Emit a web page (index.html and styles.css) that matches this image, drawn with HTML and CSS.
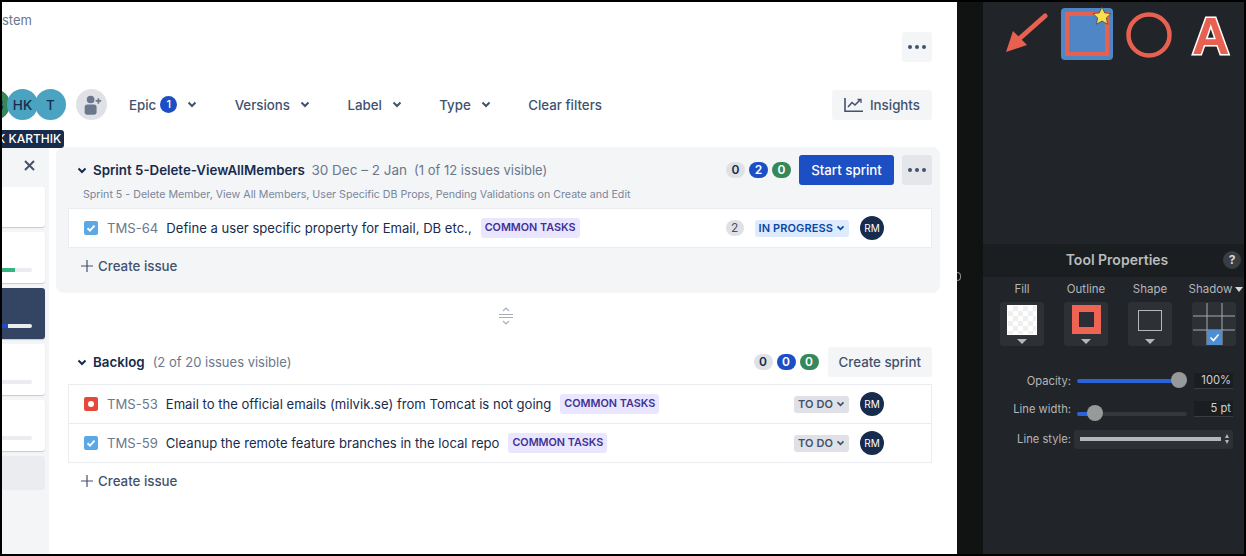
FILE: index.html
```html
<!DOCTYPE html>
<html lang="en">
<head>
    <meta charset="UTF-8">
    <meta name="viewport" content="width=device-width, initial-scale=1.0">
    <title>Backlog</title>
    <link rel="stylesheet" href="styles.css">
</head>
<body>
    <div class="jira">
        <div class="crumb">stem</div>
        <div class="top-actions">
            <button class="icon-btn"><span class="dots"><i></i><i></i><i></i></span></button>
        </div>

        <div class="toolbar">
            <div class="avatars">
                <span class="person green">AB</span>
                <span class="person teal">HK</span>
                <span class="person teal">T</span>
            </div>
            <span class="add-person">
                <svg width="24" height="24" viewBox="0 0 24 24"><circle cx="10.5" cy="6" r="4.2" fill="#6b778c"/><path d="M4 14.5a3 3 0 0 1 3-3h7a3 3 0 0 1 3 3V20a2.5 2.5 0 0 1-2.5 2.5h-8A2.5 2.5 0 0 1 4 20z" fill="#6b778c"/><path d="M19 4.5v6M16 7.500h6" stroke="#6b778c" stroke-width="1.8"/></svg>
            </span>
            <div class="filters">
                <span class="filter">Epic <b class="count">1</b><svg class="chev" viewBox="0 0 10 7"><path d="M1.500 1.500 5 5l3.500-3.500"/></svg></span>
                <span class="filter">Versions<svg class="chev" viewBox="0 0 10 7"><path d="M1.500 1.500 5 5l3.500-3.500"/></svg></span>
                <span class="filter">Label<svg class="chev" viewBox="0 0 10 7"><path d="M1.500 1.500 5 5l3.500-3.500"/></svg></span>
                <span class="filter">Type<svg class="chev" viewBox="0 0 10 7"><path d="M1.500 1.500 5 5l3.500-3.500"/></svg></span>
                <span class="filter">Clear filters</span>
            </div>
            <button class="btn insights">
                <svg width="20" height="16" viewBox="0 0 20 16" fill="none" stroke="#42526e" stroke-width="1.600"><path d="M1 1v13.200h18"/><path d="M4 10l4-4.500 3 2.500 5-5"/><path d="M13.500 2.500H17V6" stroke-width="1.300"/></svg>
                Insights
            </button>
        </div>
        <div class="tooltip">HK KARTHIK</div>

        <div class="main">
            <aside class="epics">
                <div class="epics-head">
                    <svg width="11" height="11" viewBox="0 0 11 11" stroke="#42526e" stroke-width="2"><path d="M1 1l9 9M10 1l-9 9"/></svg>
                </div>
                <div class="epic-card"></div>
                <div class="epic-card tall"><span class="bar"><i class="fill-green"></i></span></div>
                <div class="epic-card tall active"><span class="bar"><i class="fill-blue"></i></span></div>
                <div class="epic-card tall"><span class="bar"></span></div>
                <div class="epic-card tall"><span class="bar"></span></div>
                <div class="epic-card empty"></div>
            </aside>

            <div class="content">
                <section class="sprint">
                    <div class="list-head">
                        <svg class="chev dark" viewBox="0 0 10 7"><path d="M1.500 1.500 5 5l3.500-3.500"/></svg>
                        <span class="list-title">Sprint 5-Delete-ViewAllMembers</span>
                        <span class="muted dates">30 Dec – 2 Jan</span>
                        <span class="muted">(1 of 12 issues visible)</span>
                        <div class="head-right">
                            <span class="pill grey">0</span>
                            <span class="pill blue">2</span>
                            <span class="pill green">0</span>
                            <button class="btn primary">Start sprint</button>
                            <button class="icon-btn darker"><span class="dots"><i></i><i></i><i></i></span></button>
                        </div>
                    </div>
                    <p class="goal">Sprint 5 - Delete Member, View All Members, User Specific DB Props, Pending Validations on Create and Edit</p>
                    <div class="issues">
                        <div class="issue">
                            <svg class="type" viewBox="0 0 14 14"><rect width="14" height="14" rx="2" fill="#5ca8e6"/><path d="M3.500 7.200 6 9.600l4.500-5" fill="none" stroke="#fff" stroke-width="2"/></svg>
                            <span class="key">TMS-64</span>
                            <span class="summary">Define a user specific property for Email, DB etc.,</span>
                            <span class="tag">COMMON TASKS</span>
                            <div class="issue-right">
                                <span class="estimate">2</span>
                                <span class="status progress">IN PROGRESS<svg class="chev small" viewBox="0 0 10 7"><path d="M1.500 1.500 5 5l3.500-3.500"/></svg></span>
                                <span class="rm">RM</span>
                            </div>
                        </div>
                    </div>
                    <div class="create">
                        <svg width="12" height="12" viewBox="0 0 12 12" stroke="#42526e" stroke-width="1.200"><path d="M6 0v12M0 6h12"/></svg>
                        Create issue
                    </div>
                </section>

                <div class="splitter">
                    <svg width="16" height="18" viewBox="0 0 16 18" fill="none" stroke="#a5adba" stroke-width="1.100"><path d="M5 4l3-3 3 3M5 14l3 3 3-3M1 7.500h14M1 10.500h14"/></svg>
                </div>

                <section class="backlog">
                    <div class="list-head">
                        <svg class="chev dark" viewBox="0 0 10 7"><path d="M1.500 1.500 5 5l3.500-3.500"/></svg>
                        <span class="list-title">Backlog</span>
                        <span class="muted dates">(2 of 20 issues visible)</span>
                        <div class="head-right">
                            <span class="pill grey">0</span>
                            <span class="pill blue">0</span>
                            <span class="pill green">0</span>
                            <button class="btn">Create sprint</button>
                        </div>
                    </div>
                    <div class="issues">
                        <div class="issue">
                            <svg class="type" viewBox="0 0 14 14"><rect width="14" height="14" rx="2" fill="#e5493a"/><circle cx="7" cy="7" r="3" fill="#fff"/></svg>
                            <span class="key">TMS-53</span>
                            <span class="summary">Email to the official emails (milvik.se) from Tomcat is not going</span>
                            <span class="tag">COMMON TASKS</span>
                            <div class="issue-right">
                                <span class="status todo">TO DO<svg class="chev small" viewBox="0 0 10 7"><path d="M1.500 1.500 5 5l3.500-3.500"/></svg></span>
                                <span class="rm">RM</span>
                            </div>
                        </div>
                        <div class="issue">
                            <svg class="type" viewBox="0 0 14 14"><rect width="14" height="14" rx="2" fill="#5ca8e6"/><path d="M3.500 7.200 6 9.600l4.500-5" fill="none" stroke="#fff" stroke-width="2"/></svg>
                            <span class="key">TMS-59</span>
                            <span class="summary">Cleanup the remote feature branches in the local repo</span>
                            <span class="tag">COMMON TASKS</span>
                            <div class="issue-right">
                                <span class="status todo">TO DO<svg class="chev small" viewBox="0 0 10 7"><path d="M1.500 1.500 5 5l3.500-3.500"/></svg></span>
                                <span class="rm">RM</span>
                            </div>
                        </div>
                    </div>
                    <div class="create">
                        <svg width="12" height="12" viewBox="0 0 12 12" stroke="#42526e" stroke-width="1.200"><path d="M6 0v12M0 6h12"/></svg>
                        Create issue
                    </div>
                </section>
            </div>
        </div>
    </div>

    <div class="gutter"></div>

    <div class="panel">
        <div class="tools">
            <svg class="tool-arrow" width="44" height="42" viewBox="0 0 44 42"><path d="M39 4 13 27" stroke="#e8604f" stroke-width="5" stroke-linecap="round"/><path d="M0 40 7 19 21 33z" fill="#e8604f"/></svg>
            <div class="tool-square">
                <svg class="star" width="20" height="20" viewBox="0 0 20 20"><path d="M10 1l2.700 5.900 6.300.7-4.700 4.300 1.300 6.300L10 15l-5.600 3.200 1.300-6.300L1 7.600l6.300-.7z" fill="#f6e04f" stroke="#2a2c30" stroke-width=".6"/></svg>
            </div>
            <svg class="tool-circle" width="46" height="46" viewBox="0 0 46 46"><circle cx="23" cy="23" r="20.500" fill="none" stroke="#e8604f" stroke-width="4.500"/></svg>
            <span class="tool-text">A</span>
        </div>

        <div class="props-head">
            <span>Tool Properties</span>
            <span class="help">?</span>
        </div>

        <div class="wells">
            <div class="well-col">
                <span class="well-label">Fill</span>
                <div class="well"><span class="swatch-fill"></span><i class="caret"></i></div>
            </div>
            <div class="well-col">
                <span class="well-label">Outline</span>
                <div class="well"><span class="swatch-outline"></span><i class="caret"></i></div>
            </div>
            <div class="well-col">
                <span class="well-label">Shape</span>
                <div class="well"><span class="swatch-shape"></span><i class="caret"></i></div>
            </div>
            <div class="well-col">
                <span class="well-label">Shadow <i class="caret light"></i></span>
                <div class="well">
                    <svg width="44" height="44" viewBox="0 0 44 44"><path d="M15 1v42M30 1v42M1 14h42M1 28h42" stroke="#a8abaf" stroke-width="1"/><rect x="15" y="28" width="15" height="15" fill="#4f8ed0"/><path d="M18.500 35.500l3 3 5-6" fill="none" stroke="#fff" stroke-width="1.600"/></svg>
                </div>
            </div>
        </div>

        <div class="controls">
            <label>Opacity:</label>
            <div class="slider"><span class="track"><i style="width: 100%"></i></span><b class="knob knob-end"></b></div>
            <span class="value">100%</span>

            <label>Line width:</label>
            <div class="slider low"><span class="track"><i style="width: 14%"></i></span><b class="knob knob-start"></b></div>
            <span class="value">5 pt</span>

            <label>Line style:</label>
            <div class="line-select">
                <span class="line"></span>
                <span class="stepper"><i class="up"></i><i class="down"></i></span>
            </div>
        </div>
    </div>
</body>
</html>
```

FILE: styles.css
```css
* {
    box-sizing: border-box;
}

html, body {
    height: 100%;
}

body {
    margin: 0;
    border: 2px solid #000;
    display: flex;
    overflow: hidden;
    font-family: Inter, "Noto Sans", sans-serif;
    background-color: #000;
}

button {
    font-family: inherit;
    border: none;
    cursor: pointer;
}

/* left white app */
.jira {
    width: 955px;
    background-color: #fff;
    position: relative;
    overflow: hidden;
    flex-shrink: 0;
}

.crumb {
    height: 30px;
    padding-top: 10px;
    font-size: 13px;
    line-height: 17px;
    color: #6b778c;
}

.top-actions {
    display: flex;
    justify-content: flex-end;
    padding-right: 25px;
}

.icon-btn {
    width: 30px;
    height: 30px;
    background-color: #f4f5f7;
    border-radius: 3px;
    display: flex;
    align-items: center;
    justify-content: center;
    padding: 0;
}

.icon-btn.darker {
    background-color: #e4e6ea;
}

.dots {
    display: flex;
    gap: 3px;
}

.dots i {
    width: 4px;
    height: 4px;
    border-radius: 50%;
    background-color: #42526e;
}

.toolbar {
    display: flex;
    align-items: center;
    margin-top: 27px;
    height: 31px;
    padding-right: 25px;
}

.avatars {
    display: flex;
    margin-left: -23px;
}

.person {
    width: 31px;
    height: 31px;
    border-radius: 50%;
    margin-right: -3px;
    display: flex;
    align-items: center;
    justify-content: center;
    font-size: 13.500px;
    font-weight: 500;
    color: #172b4d;
}

.person.green {
    background-color: #36875a;
}

.person.teal {
    background-color: #4aa3c0;
}

.add-person {
    width: 31px;
    height: 31px;
    margin-left: 13px;
    border-radius: 50%;
    background-color: #dfe1e6;
    display: flex;
    align-items: center;
    justify-content: center;
}

.add-person svg {
    width: 22px;
    height: 22px;
}

.filters {
    display: flex;
    align-items: center;
    gap: 37.400px;
    margin-left: 22px;
}

.filter {
    display: flex;
    align-items: center;
    font-size: 13.300px;
    font-weight: 500;
    color: #42526e;
}

.count {
    width: 17px;
    height: 17px;
    margin-left: 4px;
    border-radius: 50%;
    background-color: #1d4fc4;
    color: #fff;
    font-size: 11px;
    font-weight: 500;
    line-height: 17px;
    text-align: center;
}

.chev {
    width: 10px;
    height: 7px;
    margin-left: 10px;
    fill: none;
    stroke: #42526e;
    stroke-width: 2;
}

.chev.dark {
    margin-left: 0;
    stroke: #172b4d;
}

.chev.small {
    width: 9px;
    height: 6px;
    margin-left: 3px;
    stroke: currentColor;
}

.btn {
    height: 30px;
    padding: 0 11px;
    border-radius: 3px;
    background-color: #f4f5f7;
    color: #42526e;
    font-size: 13.300px;
    font-weight: 500;
    display: flex;
    align-items: center;
    white-space: nowrap;
}

.btn.primary {
    width: 95px;
    justify-content: center;
    background-color: #1d4fc4;
    color: #fff;
    margin-left: 4px;
}

.insights {
    margin-left: auto;
    gap: 6px;
    width: 100px;
    padding: 0 12px;
}

.tooltip {
    position: absolute;
    top: 128px;
    left: -20px;
    height: 18px;
    padding: 0 3px 0 6px;
    background-color: #172b4d;
    color: #fff;
    border-radius: 3px;
    font-size: 12px;
    font-weight: 500;
    line-height: 18px;
    white-space: nowrap;
    z-index: 2;
}

.main {
    display: flex;
    margin-top: 27px;
}

/* epics column */
.epics {
    width: 47px;
    height: 407px;
    background-color: #f4f5f7;
    border-top-right-radius: 3px;
    padding-right: 4px;
    flex-shrink: 0;
}

.epics-head {
    height: 40px;
    padding: 8px 0 0 22px;
}

.epic-card {
    height: 40px;
    margin-bottom: 5px;
    background-color: #fff;
    border-radius: 0 3px 3px 0;
    box-shadow: 0 1px 1px rgba(9, 30, 66, 0.2);
    position: relative;
}

.epic-card.tall {
    height: 51px;
}

.epic-card.active {
    background-color: #344563;
}

.epic-card.empty {
    height: 34px;
    background-color: #ebecf0;
    box-shadow: none;
}

.bar {
    position: absolute;
    left: 0;
    right: 13px;
    bottom: 11px;
    height: 4px;
    background-color: #ebecf0;
    border-radius: 0 2px 2px 0;
    overflow: hidden;
}

.bar i {
    display: block;
    height: 100%;
}

.fill-green {
    width: 13px;
    background-color: #36b37e;
}

.fill-blue {
    width: 6px;
    background-color: #1d4fc4;
}

/* sprint + backlog */
.content {
    width: 884px;
    margin-left: 7px;
}

.sprint {
    height: 146px;
    background-color: #f4f5f7;
    border-radius: 8px;
    padding: 8px 8px 0 12px;
}

.list-head {
    display: flex;
    align-items: center;
    height: 30px;
    padding-left: 9px;
    font-size: 13.200px;
}

.list-title {
    margin-left: 6px;
    font-size: 13.300px;
    font-weight: 600;
    color: #172b4d;
}

.muted {
    color: #6b778c;
    font-size: 13px;
    margin-left: 7px;
}

.dates {
    font-size: 13.500px;
    margin-left: 6.500px;
}

.backlog .dates {
    font-size: 13px;
    margin-left: 8px;
}

.head-right {
    margin-left: auto;
    display: flex;
    align-items: center;
    gap: 4px;
}

.head-right .icon-btn {
    margin-left: 4px;
}

.head-right .btn:not(.primary) {
    margin-left: 5px;
}

.pill {
    width: 19px;
    height: 16px;
    border-radius: 8px;
    font-size: 12px;
    font-weight: 600;
    line-height: 16px;
    text-align: center;
}

.pill.grey {
    background-color: #dfe1e6;
    color: #172b4d;
}

.pill.blue {
    background-color: #1d4fc4;
    color: #fff;
}

.pill.green {
    background-color: #36875a;
    color: #fff;
}

.goal {
    margin: 0;
    padding: 2px 0 0 15px;
    height: 23px;
    font-size: 10.650px;
    line-height: 16px;
    color: #7a869a;
}

.issues {
    background-color: #fff;
    border: 1px solid #ebecf0;
}

.issue {
    display: flex;
    align-items: center;
    height: 38px;
    padding: 0 47px 0 15px;
    font-size: 13.100px;
    color: #172b4d;
}

.issue + .issue {
    border-top: 1px solid #ebecf0;
    height: 39px;
}

.type {
    width: 14px;
    height: 14px;
    flex-shrink: 0;
}

.key {
    margin-left: 9px;
    color: #6b778c;
}

.summary {
    margin-left: 8px;
}

.tag {
    margin-left: 9px;
    height: 20px;
    padding: 0 4px;
    border-radius: 3px;
    background-color: #eae6ff;
    color: #403294;
    font-size: 10.800px;
    font-weight: 600;
    line-height: 19px;
}

.issue-right {
    margin-left: auto;
    display: flex;
    align-items: center;
    gap: 11px;
}

.estimate {
    width: 18px;
    height: 16px;
    border-radius: 8px;
    background-color: #dfe1e6;
    color: #42526e;
    font-size: 12px;
    line-height: 16px;
    text-align: center;
}

.status {
    height: 17px;
    padding: 0 4px;
    border-radius: 3px;
    display: flex;
    align-items: center;
    font-size: 11px;
    font-weight: 600;
    letter-spacing: 0.1px;
}

.status.progress {
    background-color: #deebff;
    color: #0747a6;
}

.status.todo {
    background-color: #dfe1e6;
    color: #42526e;
}

.rm {
    width: 24px;
    height: 24px;
    border-radius: 50%;
    background-color: #172b4d;
    color: #fff;
    font-size: 10px;
    line-height: 24px;
    text-align: center;
}

.create {
    display: flex;
    align-items: center;
    gap: 5px;
    height: 36px;
    padding-left: 13px;
    font-size: 13.300px;
    font-weight: 500;
    color: #42526e;
}

.splitter {
    height: 54px;
    padding: 14px 0 0 442px;
}

.backlog {
    padding: 0 8px 0 12px;
}

.backlog .list-head {
    margin-bottom: 7px;
}

/* dark tool panel */
.gutter {
    width: 26px;
    background-color: #111212;
    flex-shrink: 0;
    position: relative;
}

/* little ring poking out behind the white window */
.gutter::after {
    content: "";
    position: absolute;
    left: 0;
    top: 270px;
    width: 3px;
    height: 7px;
    border: 1px solid #8a8c90;
    border-left: none;
    border-radius: 0 4px 4px 0;
}

.panel {
    flex: 1;
    background-color: #212429;
    color: #b4b6b9;
}

.tools {
    height: 242px;
    padding: 6px 0 0 23px;
    display: flex;
    align-items: flex-start;
}

.tool-arrow {
    margin-top: 4px;
    flex-shrink: 0;
}

.tool-square {
    width: 52px;
    height: 52px;
    margin-left: 11px;
    border-radius: 4px;
    background-color: #4f86c6;
    padding: 4px;
    position: relative;
    flex-shrink: 0;
}

.tool-square::before {
    content: "";
    display: block;
    width: 36px;
    height: 36px;
    border: 4px solid #e8604f;
}

.star {
    position: absolute;
    top: -2px;
    right: 1px;
}

.tool-circle {
    margin: 4px 0 0 13px;
    flex-shrink: 0;
}

.tool-text {
    margin: -2px 0 0 20px;
    font-family: "Liberation Sans", sans-serif;
    font-size: 52px;
    font-weight: 700;
    line-height: 60px;
    color: #e8604f;
    -webkit-text-stroke: 3px #fff;
    paint-order: stroke fill;
}

.props-head {
    height: 33px;
    background-color: #1b1e21;
    display: flex;
    align-items: center;
    justify-content: center;
    position: relative;
    padding: 0 0 2px 7px;
    font-size: 14px;
    font-weight: 600;
    color: #b9bbbd;
}

.help {
    position: absolute;
    right: 3px;
    top: 7px;
    width: 18px;
    height: 18px;
    border-radius: 50%;
    background-color: #3a3d42;
    color: #d6d7d9;
    font-size: 12px;
    font-weight: 700;
    line-height: 18px;
    text-align: center;
}

.wells {
    display: flex;
    gap: 20px;
    padding: 5px 0 0 17px;
}

.well-col {
    width: 44px;
    display: flex;
    flex-direction: column;
    align-items: center;
    gap: 6px;
}

.well-label {
    height: 14px;
    font-size: 11.500px;
    line-height: 14px;
    white-space: nowrap;
    display: flex;
    align-items: center;
    gap: 3px;
}

.well-col:last-child .well-label {
    margin-left: 4px;
}

.well {
    width: 44px;
    height: 44px;
    border-radius: 3px;
    background-color: #2d3035;
    position: relative;
    display: flex;
    justify-content: center;
    padding-top: 3px;
}

.well svg {
    margin-top: -3px;
}

.swatch-fill {
    width: 30px;
    height: 30px;
    border: 1px solid #fff;
    background-color: #fafafa;
    background-image: repeating-conic-gradient(#efefef 0 25%, #fff 0 50%);
    background-size: 10px 10px;
}

.swatch-outline {
    width: 29px;
    height: 29px;
    border: 7px solid #ee6352;
    background-color: #2a2d33;
}

.swatch-shape {
    width: 24px;
    height: 21px;
    margin-top: 5px;
    border: 1px solid #b4b6b9;
}

.caret {
    position: absolute;
    left: 17px;
    bottom: 2px;
    width: 0;
    height: 0;
    border-left: 5px solid transparent;
    border-right: 5px solid transparent;
    border-top: 5px solid #b4b6b9;
}

.caret.light {
    position: static;
    border-left-width: 4px;
    border-right-width: 4px;
    border-top-color: #d6d7d9;
}

.controls {
    display: grid;
    grid-template-columns: 88px 110px 40px;
    column-gap: 6px;
    grid-template-rows: 17px 17px 22px;
    row-gap: 11px;
    align-items: center;
    margin-top: 26px;
    font-size: 11.200px;
}

.controls label {
    text-align: right;
}

.slider {
    position: relative;
    height: 17px;
    display: flex;
    align-items: center;
}

.slider.low {
    margin-top: 10px;
}

.track {
    display: block;
    width: 100%;
    height: 4px;
    background-color: #34373c;
    border-radius: 2px;
    overflow: hidden;
}

.track i {
    display: block;
    height: 100%;
    background-color: #2a62d9;
}

.knob {
    position: absolute;
    top: 0;
    width: 16px;
    height: 16px;
    border-radius: 50%;
    background-color: #98999b;
}

.knob-end {
    right: 0;
}

.knob-start {
    left: 10px;
}

.value {
    height: 16px;
    margin-left: 1px;
    background-color: #1b1e21;
    border-bottom: 1px solid #3a3d42;
    color: #d0d1d3;
    line-height: 15px;
    text-align: right;
    padding-right: 2px;
}

.line-select {
    grid-column: 2 / 4;
    height: 19px;
    margin-left: -3px;
    background-color: #2d3035;
    border-radius: 3px;
    display: flex;
    align-items: center;
    gap: 4px;
    padding: 0 4px 0 6px;
}

.line {
    flex: 1;
    height: 4px;
    background-color: #b4b6b9;
}

.stepper {
    display: flex;
    flex-direction: column;
    gap: 2px;
}

.stepper i {
    width: 0;
    height: 0;
    border-left: 2.500px solid transparent;
    border-right: 2.500px solid transparent;
}

.stepper .up {
    border-bottom: 4px solid #b4b6b9;
}

.stepper .down {
    border-top: 4px solid #b4b6b9;
}
```
